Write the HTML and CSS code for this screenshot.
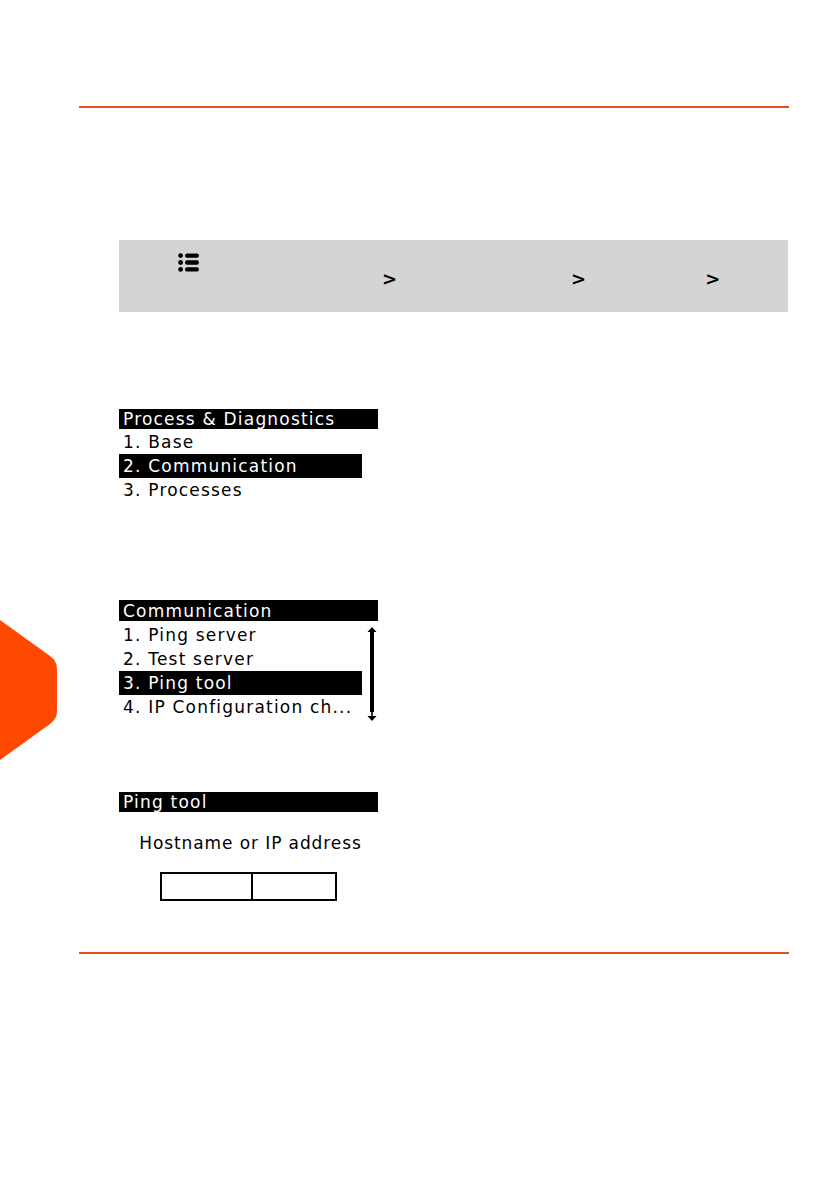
FILE: index.html
```html
<!DOCTYPE html>
<html>
<head>
<meta charset="utf-8">
<link rel="stylesheet" href="styles.css">
</head>
<body>
<div class="page">
  <div class="rule rule-top"></div>
  <div class="pathbox">
    <div class="path-icon">
      <svg width="21" height="19" viewBox="0 0 21 19">
        <circle cx="2.6" cy="2.6" r="2.4" fill="#000"/>
        <rect x="7" y="0.4" width="14" height="4.4" rx="2.2" fill="#000"/>
        <circle cx="2.6" cy="9.5" r="2.4" fill="#000"/>
        <rect x="7" y="7.3" width="14" height="4.4" rx="2.2" fill="#000"/>
        <circle cx="2.6" cy="16.4" r="2.4" fill="#000"/>
        <rect x="7" y="14.2" width="14" height="4.4" rx="2.2" fill="#000"/>
      </svg>
    </div>
    <div class="path-row">
      <span class="chev c1">&gt;</span>
      <span class="chev c2">&gt;</span>
      <span class="chev c3">&gt;</span>
    </div>
  </div>

  <div class="screen s1">
    <div class="scr-title">Process &amp; Diagnostics</div>
    <div class="scr-item">1. Base</div>
    <div class="scr-item sel">2. Communication</div>
    <div class="scr-item">3. Processes</div>
  </div>

  <div class="screen s2">
    <div class="scr-title">Communication</div>
    <div class="scr-body">
      <div class="scr-list">
        <div class="scr-item">1. Ping server</div>
        <div class="scr-item">2. Test server</div>
        <div class="scr-item sel">3. Ping tool</div>
        <div class="scr-item">4. IP Configuration ch...</div>
      </div>
      <div class="scrollbar">
        <svg width="10" height="94" viewBox="0 0 10 94">
          <path d="M5 0 L9.5 5 L0.5 5 Z" fill="#000"/>
          <rect x="3" y="5" width="4" height="80" fill="#000"/>
          <rect x="4.2" y="84" width="1.6" height="5" fill="#000"/>
          <path d="M5 94 L9.5 89 L0.5 89 Z" fill="#000"/>
        </svg>
      </div>
    </div>
  </div>

  <div class="screen s3">
    <div class="scr-title">Ping tool</div>
    <div class="scr-label">Hostname or IP address</div>
    <div class="ipbox">
      <div class="ipcell"></div>
      <div class="ipcell"></div>
    </div>
  </div>

  <div class="rule rule-bottom"></div>
</div>
<div class="sidetab">
  <svg width="58" height="140" viewBox="0 0 58 140">
    <path d="M0 0 L50 36 Q57 41 57 49 L57 91 Q57 99 50 104 L0 140 Z" fill="#ff4800"/>
  </svg>
</div>
</body>
</html>
```
FILE: styles.css
```css
html, body {
  margin: 0;
  padding: 0;
  background: #fff;
}
body {
  width: 839px;
  min-height: 1191px;
  position: relative;
  font-family: "DejaVu Sans", sans-serif;
}
.page {
  padding-top: 106px;
  padding-left: 79px;
  width: 710px;
}
.rule {
  height: 2px;
  background: #e5501e;
  width: 710px;
}
.pathbox {
  margin-top: 132px;
  margin-left: 40px;
  width: 669px;
  height: 72px;
  background: #d4d4d4;
  position: relative;
}
.path-icon {
  padding-left: 59px;
  padding-top: 13px;
  height: 19px;
}
.path-row {
  display: flex;
  height: 20px;
  margin-top: -3px;
  font-family: "DejaVu Sans", sans-serif;
  font-weight: bold;
  font-size: 18px;
  color: #000;
}
.chev {
  display: block;
  line-height: 20px;
}
.c1 { margin-left: 263px; }
.c2 { margin-left: 174px; }
.c3 { margin-left: 119px; }

.screen {
  margin-left: 40px;
  width: 259px;
  font-family: "DejaVu Sans", sans-serif;
  font-size: 17px;
  letter-spacing: 1.2px;
  color: #000;
}
.s1 { margin-top: 97px; }
.s2 { margin-top: 98px; }
.s3 { margin-top: 67px; }
.scr-title {
  background: #000;
  color: #fff;
  height: 20px;
  line-height: 20px;
  padding-left: 4px;
  white-space: nowrap;
  overflow: hidden;
}
.s2 .scr-title { height: 21px; line-height: 22px; }
.scr-item {
  height: 24px;
  line-height: 25px;
  padding-left: 4px;
  width: 239px;
  white-space: nowrap;
}
.s1 .scr-title + .scr-item { margin-top: 1px; }
.scr-item.sel {
  background: #000;
  color: #fff;
}
.scr-body {
  display: flex;
  margin-top: 2px;
}
.scr-list {
  width: 243px;
}
.scrollbar {
  padding-left: 5px;
  padding-top: 4px;
}
.scr-label {
  margin-top: 20px;
  text-align: center;
  padding-left: 4px;
  height: 22px;
  line-height: 22px;
  letter-spacing: 0.9px;
  white-space: nowrap;
}
.ipbox {
  margin-top: 18px;
  margin-left: 41px;
  width: 173px;
  height: 25px;
  border: 2px solid #000;
  display: flex;
}
.ipcell {
  flex: 0 0 89px;
  border-right: 2px solid #000;
}
.ipcell + .ipcell {
  flex: 1;
  border-right: none;
}
.rule-bottom {
  margin-top: 51px;
}
.sidetab {
  position: absolute;
  left: 0;
  top: 620px;
  width: 58px;
  height: 140px;
}
```
